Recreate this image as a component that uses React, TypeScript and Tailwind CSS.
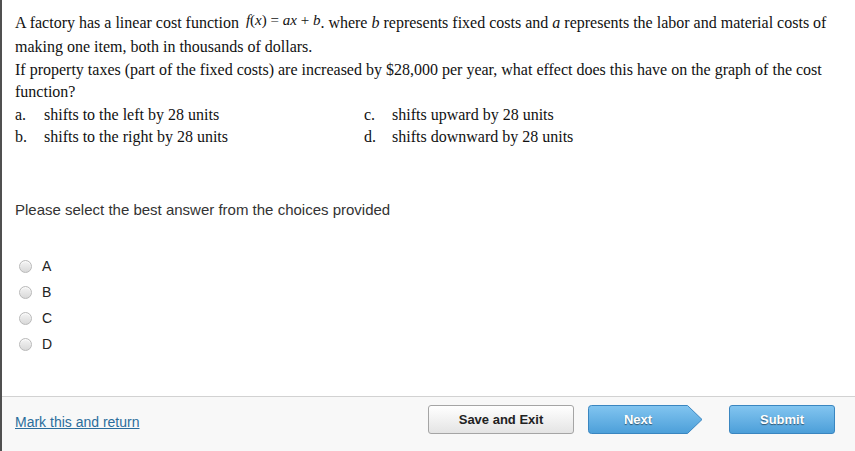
import React from 'react';

const serif = { fontFamily: '"Liberation Serif", "Times New Roman", serif' };

function Radio({ label }: { label: string }) {
  return (
    <label className="flex h-[26px] items-center">
      <span className="ml-[4px] h-[13px] w-[13px] rounded-full border border-[#b9b9b9] bg-linear-to-b from-[#f4f4f4] to-[#d9d9d9] shadow-[inset_0_1px_1px_rgba(255,255,255,0.8)]" />
      <span className="ml-[10px] text-[14px] text-[#222]">{label}</span>
    </label>
  );
}

export default function App() {
  const choices = [
    ['a.', 'shifts to the left by 28 units', 'c.', 'shifts upward by 28 units'],
    ['b.', 'shifts to the right by 28 units', 'd.', 'shifts downward by 28 units'],
  ];

  return (
    <div className="flex h-[451px] w-[855px] flex-col border-l-2 border-[#505050] bg-white font-['Liberation_Sans',Arial,sans-serif]">
      <div className="flex-1 pl-[13px] pt-[11px]">
        {/* Question */}
        <div style={serif} className="w-[828px] text-[16px] leading-[22px] text-[#111]">
          <p className="mb-[1px]">
            A factory has a linear cost function{' '}
            <span className="relative -top-[3px] pl-[3px] text-[15px] leading-[25px]">
              <i>f</i>(<i>x</i>) = <i>ax</i> + <i>b</i>
            </span>
            . where <i>b</i> represents fixed costs and <i>a</i> represents the labor and material costs of
            making one item, both in thousands of dollars.
          </p>
          <p>
            If property taxes (part of the fixed costs) are increased by $28,000 per year, what effect does this have on
            the graph of the cost function?
          </p>
          <div className="grid grid-cols-[29px_320px_28px_1fr] pt-[1px]">
            {choices.map((row) => (
              <React.Fragment key={row[0]}>
                <span>{row[0]}</span>
                <span>{row[1]}</span>
                <span>{row[2]}</span>
                <span>{row[3]}</span>
              </React.Fragment>
            ))}
          </div>
        </div>

        <p className="mt-[51px] text-[15px] text-[#333]">Please select the best answer from the choices provided</p>

        <div className="mt-[32px] flex flex-col">
          {['A', 'B', 'C', 'D'].map((l) => (
            <Radio key={l} label={l} />
          ))}
        </div>
      </div>

      {/* Footer */}
      <div className="flex h-[55px] items-start border-t border-[#d2d2d2] bg-[#f8f8f8] pl-[13px] pt-[8px]">
        <a href="#" className="mt-[7px] w-[413px] text-[14px] text-[#2b6d9c] underline">
          Mark this and return
        </a>
        <button className="h-[29px] w-[146px] rounded-[3px] border border-[#a5a5a5] bg-linear-to-b from-white to-[#e4e4e4] text-[13px] font-bold text-[#222]">
          Save and Exit
        </button>
        <button className="relative ml-[14px] h-[29px] w-[115px]">
          <svg className="absolute inset-0" width="115" height="29" viewBox="0 0 115 29">
            <defs>
              <linearGradient id="nx" x1="0" y1="0" x2="0" y2="1">
                <stop offset="0" stopColor="#82c5f0" />
                <stop offset="1" stopColor="#4c9fd9" />
              </linearGradient>
            </defs>
            <path
              d="M3.5 0.5 H99.5 L114 14.5 L99.5 28.5 H3.5 Q0.5 28.5 0.5 25.5 V3.5 Q0.5 0.5 3.5 0.5 Z"
              fill="url(#nx)"
              stroke="#3a86c0"
            />
          </svg>
          <span className="relative block w-[100px] text-center text-[13px] font-bold text-white [text-shadow:0_1px_1px_rgba(0,0,0,0.5)]">
            Next
          </span>
        </button>
        <button className="ml-[26px] h-[29px] w-[106px] rounded-[3px] border border-[#3a86c0] bg-linear-to-b from-[#82c5f0] to-[#4c9fd9] text-[13px] font-bold text-white [text-shadow:0_1px_1px_rgba(0,0,0,0.5)]">
          Submit
        </button>
      </div>
    </div>
  );
}
